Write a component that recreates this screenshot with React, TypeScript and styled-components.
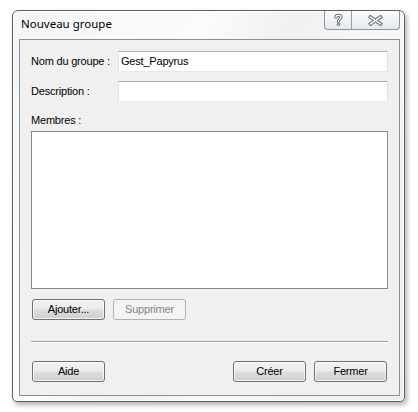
import React from "react";
import styled, { createGlobalStyle } from "styled-components";

const Global = createGlobalStyle`
  html, body { margin: 0; padding: 0; background: #ffffff; }
  * { box-sizing: border-box; }
`;

const Page = styled.div`
  padding: 10px 0 0 12px;
  width: 418px;
  height: 412px;
`;

const Frame = styled.div`
  width: 393px;
  height: 392px;
  display: flex;
  flex-direction: column;
  border: 1px solid #5c5f63;
  border-radius: 6px 6px 5px 5px;
  padding: 0 4px 5px 6px;
  background: linear-gradient(115deg, #f4f5f6 0%, #fbfbfc 35%, #eef0f2 50%, #f7f8f9 65%, #eceef0 100%);
  box-shadow: inset 0 0 0 1px rgba(255, 255, 255, 0.85), 2px 3px 5px rgba(0, 0, 0, 0.3);
`;

const TitleBar = styled.div`
  height: 28px;
  flex: none;
  display: flex;
  justify-content: space-between;
  align-items: flex-start;
`;

const Title = styled.div`
  padding: 5px 0 0 2px;
  font-family: "Noto Sans", "Open Sans", sans-serif;
  font-size: 11.5px;
  line-height: 16px;
  color: #000;
`;

const CaptionGroup = styled.div`
  display: flex;
  height: 19px;
  border: 1px solid #8e9399;
  border-top: none;
  border-radius: 0 0 4px 4px;
  background: linear-gradient(#fcfcfd, #eef0f2 60%, #e6e9ec);
  overflow: hidden;
`;

const CaptionButton = styled.div<{ $w: number; $divider?: boolean }>`
  width: ${(p) => p.$w}px;
  height: 100%;
  display: flex;
  align-items: center;
  justify-content: center;
  border-left: ${(p) => (p.$divider ? "1px solid #9aa0a6" : "none")};
`;

const Client = styled.div`
  flex: 1;
  display: flex;
  flex-direction: column;
  border: 1px solid #8c8f93;
  background: #f0f0f0;
  padding: 11px 11px 13px 11px;
  font-family: "Liberation Sans", Arial, sans-serif;
  font-size: 11px;
  letter-spacing: -0.2px;
  color: #000;
`;

const FieldRow = styled.div<{ $mt: number }>`
  display: grid;
  grid-template-columns: 87px 1fr;
  align-items: center;
  height: 21px;
  margin-top: ${(p) => p.$mt}px;
`;

const Label = styled.label`
  line-height: 13px;
  white-space: nowrap;
`;

const TextBox = styled.div`
  height: 21px;
  background: #fff;
  border: 1px solid #e3e9ef;
  border-top-color: #abadb3;
  border-left-color: #e2e3ea;
  border-right-color: #dbdfe6;
  border-radius: 1px;
  padding: 0 2px;
  line-height: 19px;
  white-space: nowrap;
`;

const SectionLabel = styled.div`
  margin-top: 12px;
  line-height: 13px;
`;

const ListBox = styled.div`
  margin-top: 4px;
  height: 158px;
  background: #fff;
  border: 1px solid #828790;
`;

const ButtonRow = styled.div<{ $mt: number }>`
  display: flex;
  gap: 8px;
  padding: 0 1px;
  margin-top: ${(p) => p.$mt}px;
`;

const Spacer = styled.div`
  flex: 1;
`;

const Button = styled.button`
  width: 73px;
  height: 21px;
  padding: 0;
  font-family: "Liberation Sans", Arial, sans-serif;
  font-size: 11px;
  letter-spacing: -0.2px;
  color: #000;
  border: 1px solid #707070;
  border-radius: 3px;
  background: linear-gradient(#f2f2f2 0%, #ebebeb 48%, #dddddd 52%, #cfcfcf 100%);
  box-shadow: inset 0 0 0 1px rgba(255, 255, 255, 0.75);
  line-height: 19px;

  &:disabled {
    color: #838383;
    border-color: #adb2b5;
    background: #f4f4f4;
    box-shadow: none;
  }
`;

const Separator = styled.div`
  margin-top: 21px;
  height: 2px;
  border-top: 1px solid #a0a0a0;
  border-bottom: 1px solid #ffffff;
`;

const HelpIcon = () => (
  <svg width="11" height="14" viewBox="0 0 11 14">
    <path d="M3 4 C3 1.8 8 1.8 8 4 C8 5.8 5.5 6 5.5 8.3" fill="none" stroke="#6f7378" strokeWidth="3.2" strokeLinecap="round" />
    <circle cx="5.5" cy="11.3" r="1.6" fill="#6f7378" />
    <path d="M3 4 C3 1.8 8 1.8 8 4 C8 5.8 5.5 6 5.5 8.3" fill="none" stroke="#ffffff" strokeWidth="1.2" strokeLinecap="round" />
    <circle cx="5.5" cy="11.3" r="0.55" fill="#ffffff" />
  </svg>
);

const CloseIcon = () => (
  <svg width="15" height="11" viewBox="0 0 15 11">
    <path d="M2.5 2 L12.5 9 M12.5 2 L2.5 9" fill="none" stroke="#6f7378" strokeWidth="3.6" strokeLinecap="square" />
    <path d="M2.5 2 L12.5 9 M12.5 2 L2.5 9" fill="none" stroke="#ffffff" strokeWidth="1.4" strokeLinecap="square" />
  </svg>
);

export default function App() {
  return (
    <Page>
      <Global />
      <Frame>
        <TitleBar>
          <Title>Nouveau groupe</Title>
          <CaptionGroup>
            <CaptionButton $w={26}>
              <HelpIcon />
            </CaptionButton>
            <CaptionButton $w={48} $divider>
              <CloseIcon />
            </CaptionButton>
          </CaptionGroup>
        </TitleBar>
        <Client>
          <FieldRow $mt={0}>
            <Label>Nom du groupe :</Label>
            <TextBox>Gest_Papyrus</TextBox>
          </FieldRow>
          <FieldRow $mt={9}>
            <Label>Description :</Label>
            <TextBox />
          </FieldRow>
          <SectionLabel>Membres :</SectionLabel>
          <ListBox />
          <ButtonRow $mt={10}>
            <Button>Ajouter...</Button>
            <Button disabled>Supprimer</Button>
          </ButtonRow>
          <Separator />
          <ButtonRow $mt={18}>
            <Button>Aide</Button>
            <Spacer />
            <Button>Créer</Button>
            <Button>Fermer</Button>
          </ButtonRow>
        </Client>
      </Frame>
    </Page>
  );
}
